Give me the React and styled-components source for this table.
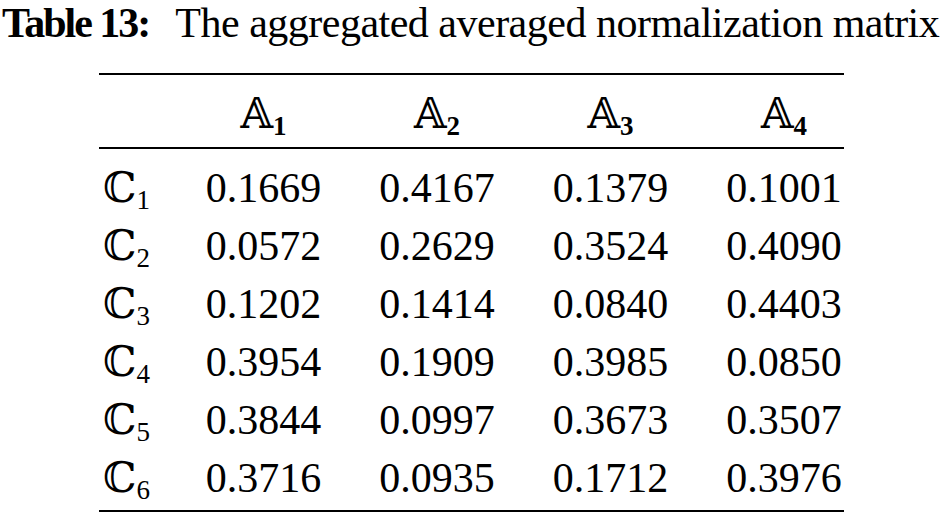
import React from 'react';
import styled, { createGlobalStyle } from 'styled-components';

const GlobalStyle = createGlobalStyle`
html, body {
  margin: 0;
  padding: 0;
  background: #fff;
}
body {
  font-family: "Liberation Serif", "DejaVu Serif", serif;
  color: #000;
}
`

const Page = styled.div`
width: 943px;
height: 515px;
overflow: hidden;
`
const Caption = styled.div`
font-size: 42px;
line-height: 47px;
letter-spacing: -0.5px;
padding-left: 2px;
white-space: nowrap;
`
const CaptionLabel = styled.b`
letter-spacing: -2px;
margin-right: 26px;
`
const Table = styled.div`
width: 745px;
margin: 26px auto 0;
border-top: 2px solid #000;
border-bottom: 2px solid #000;
`
const Row = styled.div`
display: grid;
grid-template-columns: 51px repeat(4, 120px);
column-gap: 53.5px;
font-size: 42px;
line-height: 58px;
`
const HeadRow = styled(Row)`
padding: 10px 0 4px;
border-bottom: 2px solid #000;
`
const Body = styled.div`
padding: 10px 0 3px;
`
const Label = styled.div`
padding-left: 4px;
white-space: nowrap;
`
const Cell = styled.div`
text-align: center;
white-space: nowrap;
`
const Symbol = styled.span`
font-family: "DejaVu Serif", "DejaVu Sans", serif;
font-weight: ${(props) => (props.$head ? 300 : 200)};
`
const Sub = styled.sub`
font-size: 27px;
line-height: 0;
vertical-align: -7px;
font-weight: ${(props) => (props.$bold ? 700 : 400)};
`

const rows = [
  ['0.1669', '0.4167', '0.1379', '0.1001'],
  ['0.0572', '0.2629', '0.3524', '0.4090'],
  ['0.1202', '0.1414', '0.0840', '0.4403'],
  ['0.3954', '0.1909', '0.3985', '0.0850'],
  ['0.3844', '0.0997', '0.3673', '0.3507'],
  ['0.3716', '0.0935', '0.1712', '0.3976'],
]

export default function App() {
  return (
    <Page>
      <GlobalStyle />
      <Caption>
        <CaptionLabel>Table 13:</CaptionLabel>The aggregated averaged normalization matrix
      </Caption>
      <Table>
        <HeadRow>
          <Label></Label>
          {[1, 2, 3, 4].map((n) => (
            <Cell key={n}>
              <Symbol $head>𝔸</Symbol><Sub $bold>{n}</Sub>
            </Cell>
          ))}
        </HeadRow>
        <Body>
          {rows.map((values, i) => (
            <Row key={i}>
              <Label>
                <Symbol>ℂ</Symbol><Sub>{i + 1}</Sub>
              </Label>
              {values.map((v, j) => (
                <Cell key={j}>{v}</Cell>
              ))}
            </Row>
          ))}
        </Body>
      </Table>
    </Page>
  )
}
